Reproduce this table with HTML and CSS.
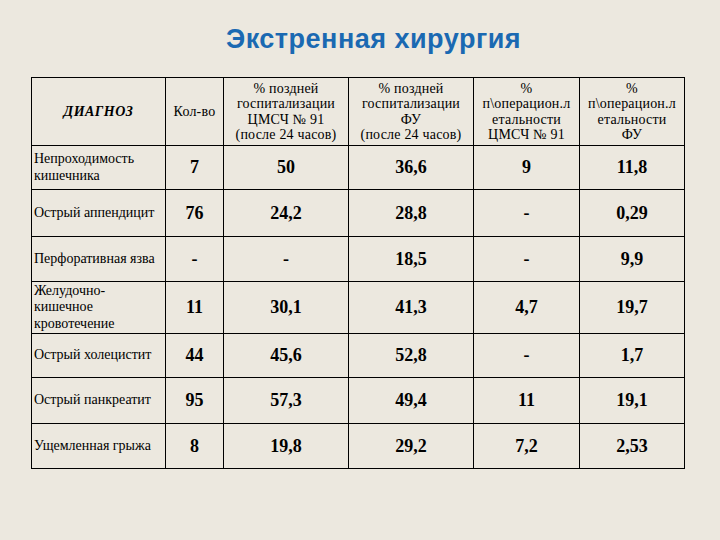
FILE: index.html
```html
<!DOCTYPE html>
<html lang="ru">
<head>
<meta charset="utf-8">
<title>Экстренная хирургия</title>
<link rel="stylesheet" href="styles.css">
</head>
<body>
<div class="slide">
  <h1 class="title">Экстренная хирургия</h1>
  <table class="grid">
    <colgroup>
      <col class="c-diag">
      <col class="c-count">
      <col class="c-a">
      <col class="c-b">
      <col class="c-c">
      <col class="c-d">
    </colgroup>
    <tr class="r-head">
      <th class="h-diag">ДИАГНОЗ</th>
      <th>Кол-во</th>
      <th>% поздней<br>госпитализации<br>ЦМСЧ № 91<br>(после 24 часов)</th>
      <th>% поздней<br>госпитализации<br>ФУ<br>(после 24 часов)</th>
      <th>%<br>п\операцион.л<br>етальности<br>ЦМСЧ № 91</th>
      <th>%<br>п\операцион.л<br>етальности<br>ФУ</th>
    </tr>
    <tr class="r44">
      <td class="name">Непроходимость<br>кишечника</td>
      <td class="num">7</td><td class="num">50</td><td class="num">36,6</td><td class="num">9</td><td class="num">11,8</td>
    </tr>
    <tr class="r47">
      <td class="name">Острый аппендицит</td>
      <td class="num">76</td><td class="num">24,2</td><td class="num">28,8</td><td class="num">-</td><td class="num">0,29</td>
    </tr>
    <tr class="r45">
      <td class="name">Перфоративная язва</td>
      <td class="num">-</td><td class="num">-</td><td class="num">18,5</td><td class="num">-</td><td class="num">9,9</td>
    </tr>
    <tr class="r52">
      <td class="name">Желудочно-<br>кишечное<br>кровотечение</td>
      <td class="num">11</td><td class="num">30,1</td><td class="num">41,3</td><td class="num">4,7</td><td class="num">19,7</td>
    </tr>
    <tr class="r44">
      <td class="name">Острый холецистит</td>
      <td class="num">44</td><td class="num">45,6</td><td class="num">52,8</td><td class="num">-</td><td class="num">1,7</td>
    </tr>
    <tr class="r46">
      <td class="name">Острый панкреатит</td>
      <td class="num">95</td><td class="num">57,3</td><td class="num">49,4</td><td class="num">11</td><td class="num">19,1</td>
    </tr>
    <tr class="r45">
      <td class="name">Ущемленная грыжа</td>
      <td class="num">8</td><td class="num">19,8</td><td class="num">29,2</td><td class="num">7,2</td><td class="num">2,53</td>
    </tr>
  </table>
</div>
</body>
</html>
```
FILE: styles.css
```css
html, body {
  margin: 0;
  padding: 0;
  background: #ece8df;
}
.slide {
  width: 720px;
  height: 540px;
  padding-top: 24px;
  box-sizing: border-box;
}
.title {
  margin: 0 0 23px 0;
  padding-left: 27px;
  text-align: center;
  font-family: "Liberation Sans", Arial, sans-serif;
  font-weight: bold;
  font-size: 27px;
  line-height: 30px;
  letter-spacing: 0.5px;
  color: #1a69b2;
}
.grid {
  margin-left: 31px;
  width: 653px;
  border-collapse: collapse;
  table-layout: fixed;
  font-family: "Liberation Serif", "Times New Roman", serif;
  color: #000;
}
.c-diag { width: 134px; }
.c-count { width: 58px; }
.c-a { width: 125px; }
.c-b { width: 125px; }
.c-c { width: 106px; }
.c-d { width: 105px; }
.grid th, .grid td {
  border: 1px solid #000;
  padding: 0 2px;
  vertical-align: middle;
}
.grid th {
  font-weight: normal;
  font-size: 14px;
  line-height: 15.5px;
  letter-spacing: 0.2px;
  text-align: center;
}
.grid th.h-diag {
  font-weight: bold;
  font-style: italic;
  letter-spacing: 0.5px;
}
.r-head { height: 68px; }
.r44 { height: 44px; }
.r45 { height: 45px; }
.r46 { height: 46px; }
.r47 { height: 47px; }
.r52 { height: 52px; }
.name {
  font-size: 14px;
  line-height: 16.5px;
  text-align: left;
}
.num {
  font-size: 18px;
  font-weight: bold;
  text-align: center;
}
```
